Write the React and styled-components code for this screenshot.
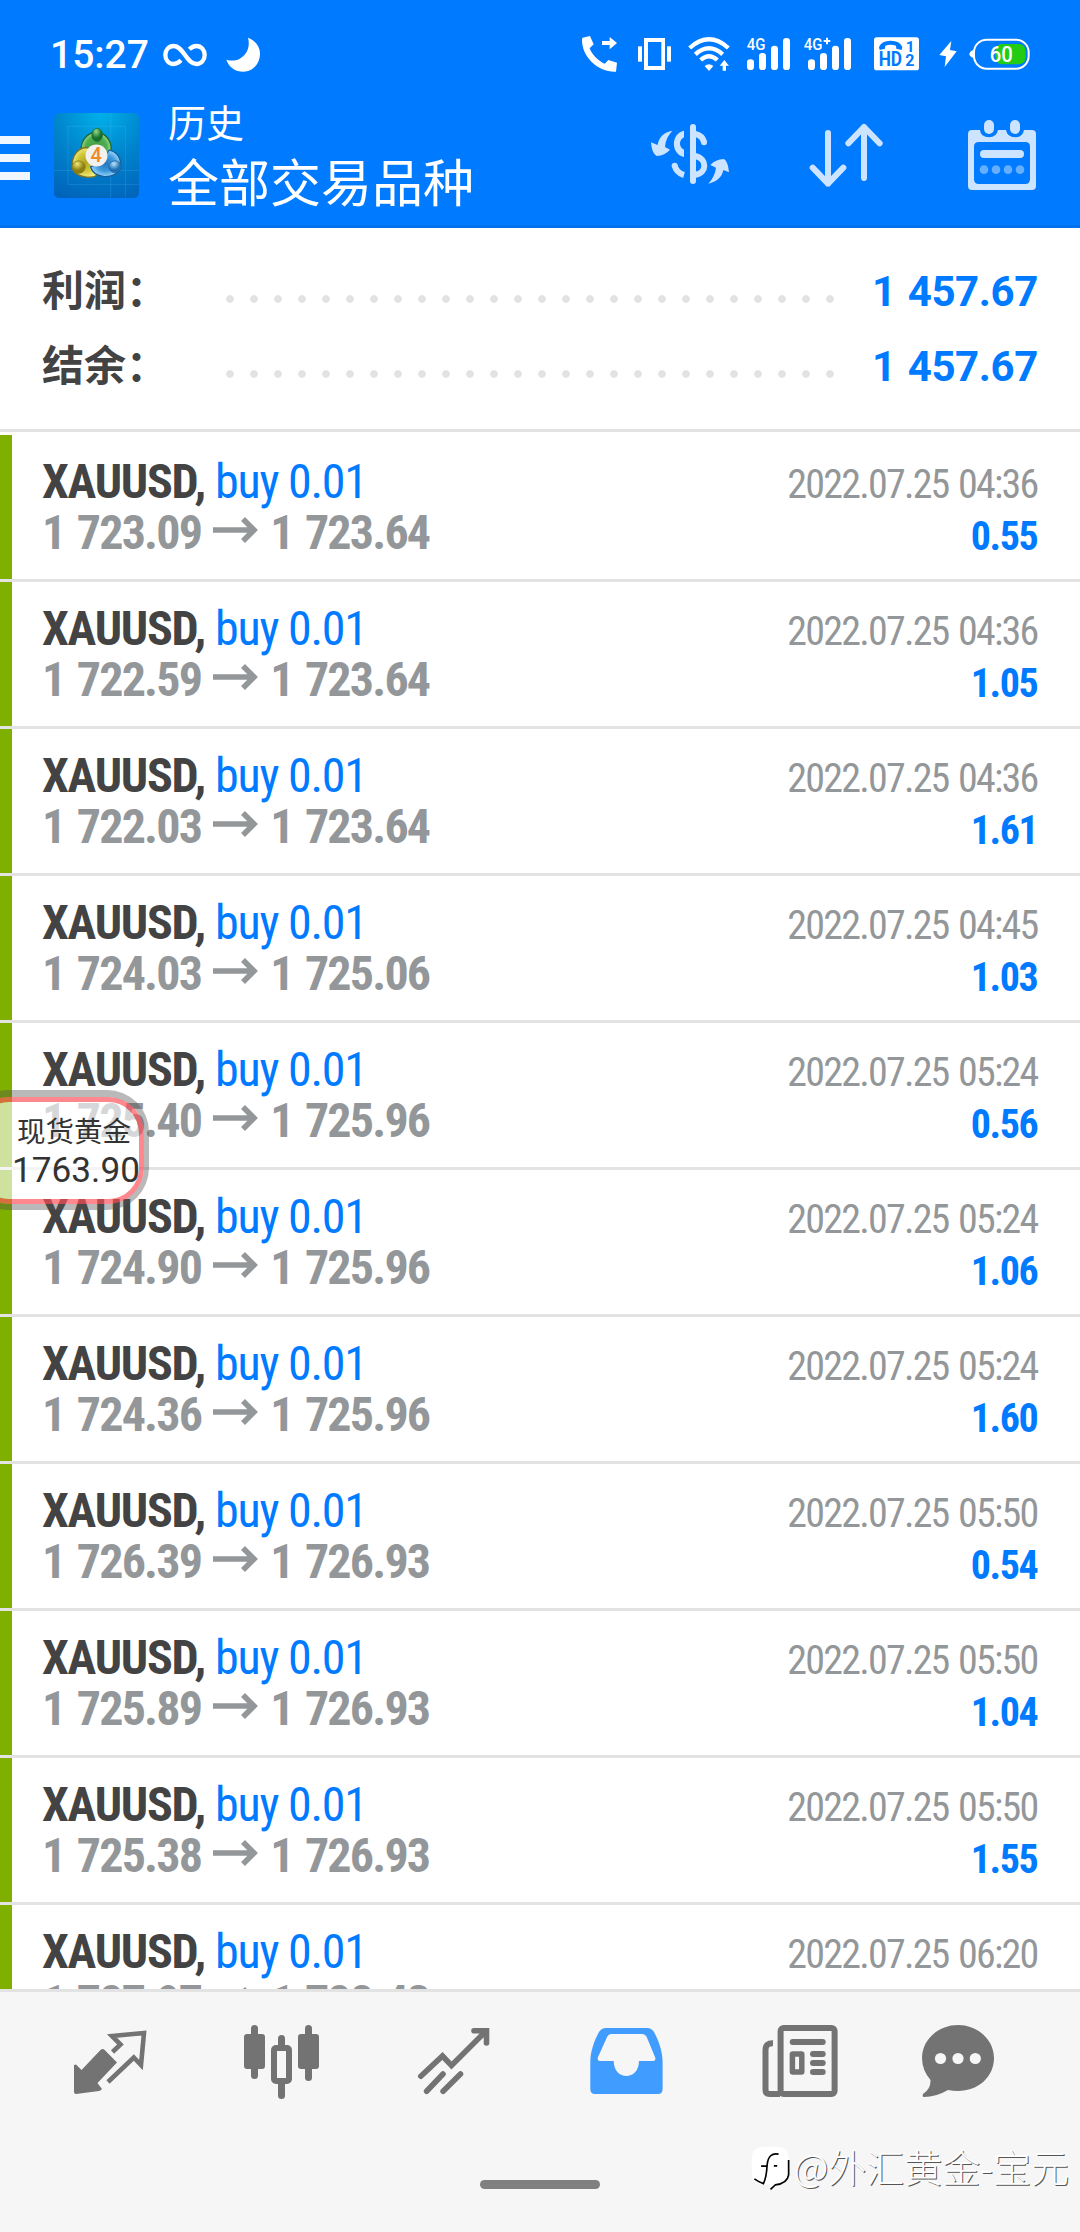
import React from 'react'
import styled, { createGlobalStyle } from 'styled-components';


const deals = [
    { open: '1 723.09', close: '1 723.64', time: '2022.07.25 04:36', profit: '0.55' },
    { open: '1 722.59', close: '1 723.64', time: '2022.07.25 04:36', profit: '1.05' },
    { open: '1 722.03', close: '1 723.64', time: '2022.07.25 04:36', profit: '1.61' },
    { open: '1 724.03', close: '1 725.06', time: '2022.07.25 04:45', profit: '1.03' },
    { open: '1 725.40', close: '1 725.96', time: '2022.07.25 05:24', profit: '0.56' },
    { open: '1 724.90', close: '1 725.96', time: '2022.07.25 05:24', profit: '1.06' },
    { open: '1 724.36', close: '1 725.96', time: '2022.07.25 05:24', profit: '1.60' },
    { open: '1 726.39', close: '1 726.93', time: '2022.07.25 05:50', profit: '0.54' },
    { open: '1 725.89', close: '1 726.93', time: '2022.07.25 05:50', profit: '1.04' },
    { open: '1 725.38', close: '1 726.93', time: '2022.07.25 05:50', profit: '1.55' },
    { open: '1 727.97', close: '1 728.43', time: '2022.07.25 06:20', profit: '' },
];

const summary = [
    { label: '利润：', value: '1 457.67' },
    { label: '结余：', value: '1 457.67' },
];


const SignalBars = ({ x }) => (
    <>
        <rect x={x} y="103" width="21" height="32" rx="10" />
        <rect x={x + 36} y="84" width="21" height="51" rx="10" />
        <rect x={x + 72} y="62" width="21" height="73" rx="10" />
        <rect x={x + 108} y="39" width="21" height="96" rx="10" />
    </>
);

const StatusIcons = () => (
    <StatusGroup>
        <StatusIcon viewBox="33 30 111 120" $w={37}>
            <path d="M38 38L60 33L71 58L59 70C64 86 84 108 104 116L115 105L141 113L138 140C88 143 34 98 36 42Z" />
            <path d="M96 48H119V36L141 54L119 73V60H96Z" />
        </StatusIcon>
        <StatusIcon viewBox="201 30 105 120" $w={35} $gap={19}>
            <path fillRule="evenodd" d="M222 39H285V135H222ZM234 51V123H274V51Z" />
            <rect x="204" y="64" width="12" height="46" />
            <rect x="291" y="64" width="12" height="46" />
        </StatusIcon>
        <StatusIcon viewBox="354 30 126 120" $w={42} $gap={16}>
            <g fill="none" stroke="#fff" strokeWidth="13">
                <path d="M359 69Q417 17 475 69" />
                <path d="M376 88Q417 52 458 88" />
                <path d="M392 105Q417 82 442 105" />
            </g>
            <path d="M404 123Q417 113 430 123L417 138Z" />
            <path d="M463 105L477 122H468V137H458V122H449Z" />
        </StatusIcon>
        <StatusIcon viewBox="528 30 135 120" $w={45} $gap={16}>
            <text x="530" y="75" fontSize="49" fontWeight="500" textLength="56" lengthAdjust="spacingAndGlyphs">4G</text>
            <SignalBars x={531} />
        </StatusIcon>
        <StatusIcon viewBox="9 30 147 120" $w={49} $gap={12}>
            <text x="11" y="75" fontSize="49" fontWeight="500" textLength="56" lengthAdjust="spacingAndGlyphs">4G</text>
            <path d="M78 38H84V45H91V51H84V58H78V51H71V45H78Z" />
            <SignalBars x={24} />
        </StatusIcon>
        <StatusIcon viewBox="219 30 141 120" $w={47} $gap={21}>
            <rect x="222" y="37" width="135" height="99" rx="8" />
            <g fill="#007aff" fontWeight="700">
                <path d="M237 66Q245 47 272 47Q299 47 307 66L305 75L289 71L288 62Q272 56 256 62L255 71L239 75Z" />
                <text x="236" y="123" fontSize="58" textLength="70" lengthAdjust="spacingAndGlyphs">HD</text>
                <text x="317" y="80" fontSize="46">1</text>
                <text x="316" y="124" fontSize="48">2</text>
            </g>
        </StatusIcon>
        <StatusIcon viewBox="414 30 60 120" $w={20} $gap={18}>
            <path d="M454 48L418 90L438 94L434 126L470 79L450 75Z" />
        </StatusIcon>
        <StatusIcon viewBox="507 30 186 120" $w={62} $gap={11}>
            <path d="M521 74Q508 80 508 87Q508 94 521 100Z" />
            <rect x="522" y="44" width="164" height="87" rx="38" fill="none" stroke="#fff" strokeWidth="6" />
            <path fill="#22cc14" d="M600 57H655Q677 57 677 80V96Q677 118 655 118H600Q586 110 586 88Q586 66 600 57Z" />
            <text x="569" y="112" fontSize="66" fontWeight="500" textLength="69" lengthAdjust="spacingAndGlyphs">60</text>
        </StatusIcon>
    </StatusGroup>
);

const AppLogo = () => (
    <Logo viewBox="0 0 256 256">
        <defs>
            <radialGradient id="sky" cx="0.55" cy="0" r="1.1">
                <stop offset="0" stopColor="#00b0ea" />
                <stop offset="0.5" stopColor="#0084cc" />
                <stop offset="1" stopColor="#0062ba" />
            </radialGradient>
            <radialGradient id="green"><stop offset="0" stopColor="#3f9a48" /><stop offset="0.7" stopColor="#4fae4e" /><stop offset="1" stopColor="#a4dc92" /></radialGradient>
            <radialGradient id="greenBall" cx="0.4" cy="0.25"><stop offset="0" stopColor="#9ad88c" /><stop offset="1" stopColor="#14702a" /></radialGradient>
            <radialGradient id="yellow"><stop offset="0" stopColor="#b0a220" /><stop offset="0.6" stopColor="#d2c838" /><stop offset="1" stopColor="#f0ea80" /></radialGradient>
            <radialGradient id="yellowBall" cx="0.4" cy="0.25"><stop offset="0" stopColor="#f0e878" /><stop offset="1" stopColor="#8c7f10" /></radialGradient>
            <radialGradient id="blue"><stop offset="0" stopColor="#2676b8" /><stop offset="0.6" stopColor="#3f9ade" /><stop offset="1" stopColor="#98d4fa" /></radialGradient>
            <radialGradient id="blueBall" cx="0.4" cy="0.25"><stop offset="0" stopColor="#b8e4fc" /><stop offset="1" stopColor="#1d70b4" /></radialGradient>
        </defs>
        <rect width="256" height="256" rx="16" fill="url(#sky)" />
        <path d="M171 0V256M0 173H256M42 40V215H256M215 40V256M42 40H215" fill="none" stroke="#6cc8ff" strokeOpacity="0.28" strokeWidth="2" />
        <g strokeWidth="4">
            <path d="M82 112C80 84 100 58 128 58C156 60 174 84 172 112C170 130 160 142 150 150L106 146C92 138 84 126 82 112Z" fill="url(#green)" stroke="#1b6a34" />
            <path d="M55 160C54 126 74 104 100 104L122 112L134 160L128 188C122 193 110 194 98 193C74 190 56 180 55 160Z" fill="url(#yellow)" stroke="#7c7420" />
            <path d="M110 162L140 150L166 112C192 116 204 140 200 166C194 184 170 194 148 191C126 188 114 176 110 162Z" fill="url(#blue)" stroke="#17609e" />
            <ellipse cx="130" cy="66" rx="16" ry="20" fill="url(#greenBall)" stroke="#1b6a34" strokeWidth="2" />
            <ellipse cx="74" cy="163" rx="20" ry="19" fill="url(#yellowBall)" stroke="#7c7420" strokeWidth="2" />
            <ellipse cx="184" cy="162" rx="19" ry="18" fill="url(#blueBall)" stroke="#17609e" strokeWidth="2" />
        </g>
        <circle cx="128" cy="128" r="33" fill="#f3f0f0" />
        <text x="110" y="149" fontSize="60" fontWeight="500" fill="#f08a24">4</text>
    </Logo>
);

const HeaderIcons = () => (
    <ActionGroup>
        <ActionIcon viewBox="30 0 240 270" $w={80}>
            <path d="M97 62C72 66 56 82 53 105L33 97Q35 130 50 138Q75 136 90 119L75 111C76 92 84 76 97 62Z" />
            <path d="M205 221C230 215 246 202 250 180L267 187Q264 155 252 147Q226 149 211 165L228 173C226 192 217 208 205 221Z" />
            <path d="M132 62C92 70 92 132 132 141V119C116 112 116 90 132 82Z" />
            <g fill="none" stroke="#cce4ff" strokeWidth="18">
                <path d="M159 51V213" strokeLinecap="round" />
                <path d="M166 72Q188 77 192 97" />
                <path d="M166 138C202 146 202 189 166 194" />
                <path d="M104 166Q108 188 132 195" />
            </g>
            <circle cx="192" cy="97" r="9" />
            <circle cx="104" cy="167" r="9" />
        </ActionIcon>
        <ActionIcon viewBox="507 0 222 270" $w={74} $gap={79}>
            <g fill="none" stroke="#cce4ff" strokeWidth="18" strokeLinecap="round" strokeLinejoin="round">
                <path d="M564 69V221M518 173L564 221L610 173" />
                <path d="M672 204V51M625 100L672 51L719 100" />
            </g>
        </ActionIcon>
        <ActionIcon viewBox="984 0 204 270" $w={68} $gap={85}>
            <path fillRule="evenodd" d="M996 60H1020Q1022 82 1047 82Q1070 82 1074 60H1098Q1102 82 1125 82Q1148 82 1152 60H1176Q1188 60 1188 72V228Q1188 240 1176 240H996Q984 240 984 228V72Q984 60 996 60ZM1016 96Q1002 96 1002 110V208Q1002 222 1016 222H1156Q1170 222 1170 208V110Q1170 96 1156 96Z" />
            <rect x="1032" y="30" width="30" height="42" rx="15" />
            <rect x="1110" y="30" width="30" height="42" rx="15" />
            <rect x="1020" y="120" width="132" height="24" rx="12" />
            <g opacity="0.5">
                <circle cx="1032" cy="179" r="13" />
                <circle cx="1068" cy="179" r="13" />
                <circle cx="1104" cy="179" r="13" />
                <circle cx="1140" cy="179" r="13" />
            </g>
        </ActionIcon>
    </ActionGroup>
);

const NavIcons = () => (
    <NavBar>
        <NavIcon viewBox="0 0 96 96">
            <path d="M12 55L14 54.5L19.5 60L38.5 40Q40.6 38 42.7 40L55 52.5L35.5 73L40 79Q39 80.5 37 81L14 84Q12 84 12 82Z" />
            <path d="M50.5 42L58.5 34.5L50 26L82 23L79 55L71.8 47.5L46 72" fill="none" stroke="#737373" strokeWidth="4.6" />
        </NavIcon>
        <NavIcon viewBox="0 0 96 96">
            <rect x="10" y="24" width="21" height="35" rx="3" />
            <rect x="17" y="15" width="7" height="54" rx="3.5" />
            <rect x="64" y="24" width="21" height="35" rx="3" />
            <rect x="71" y="15" width="7" height="56" rx="3.5" />
            <rect x="44" y="25" width="7" height="14" rx="3.5" />
            <rect x="44" y="70" width="7" height="19" rx="3.5" />
            <rect x="40" y="38" width="15" height="33" rx="2" fill="none" stroke="#737373" strokeWidth="6" />
        </NavIcon>
        <NavIcon viewBox="0 0 96 96">
            <g fill="none" stroke="#737373" strokeWidth="5.6" strokeLinecap="round">
                <path d="M14.8 66.2L36.5 46L45.5 55.5L80 21M68 20.7H80.5V33" />
                <path d="M20.6 81.3L37 64M37.1 81.3L54.5 64" />
            </g>
        </NavIcon>
        <NavIcon viewBox="0 0 96 96" $active>
            <path fillRule="evenodd" d="M28 18H69Q73.5 18 76 22C81 31 84.6 42 84.6 52V79Q84.6 84 80 84H17Q12.3 84 12.3 79V52C12.3 42 16 31 21 22Q23.5 18 28 18ZM33 24Q30.5 24 29.3 26.5L20 47Q18.8 51 22 51H35.7C35.7 71 61 71 61 51H75Q78.5 51 77 47L68.5 26.5Q67 24 64.5 24Z" />
        </NavIcon>
        <NavIcon viewBox="0 0 96 96">
            <g fill="none" stroke="#737373" strokeWidth="6">
                <rect x="30.6" y="18" width="54" height="66" rx="3" />
                <path d="M23 33.2Q15.5 33 15.5 40V80Q15.5 84 19.5 84H30" />
                <rect x="42.4" y="44" width="9.4" height="18" rx="0.5" strokeWidth="5.5" />
            </g>
            <rect x="39.7" y="29" width="36" height="6" rx="3" />
            <rect x="60" y="41" width="15.7" height="6" rx="3" />
            <rect x="60" y="50" width="15.7" height="6" rx="3" />
            <rect x="60" y="59" width="15.7" height="6" rx="3" />
        </NavIcon>
        <NavIcon viewBox="0 0 96 96">
            <path d="M36 15C56 15 72 30 72 48C72 67 56 81 36 81Q31 81 26 80Q14 87 2 87Q0 87 1 84Q9 79 8.5 70Q0 60 0 48C0 30 16 15 36 15Z" />
            <g fill="#f6f6f6">
                <circle cx="18.5" cy="48.5" r="5.6" />
                <circle cx="36" cy="48.5" r="5.6" />
                <circle cx="53.3" cy="48.5" r="5.6" />
            </g>
        </NavIcon>
    </NavBar>
);


const App = () => {

    return (
        <PageLayout>
            <GlobalStyle />

            <Header>
                <StatusBar>
                    <Clock>15:27</Clock>
                    <StatusIcon viewBox="0 0 132 120" $w={44} $gap={15}>
                        <path d="M54 76C47 83 40 87 32 87C17 87 7 75 7 60C7 45 17 33 32 33C62 33 70 87 100 87C115 87 125 75 125 60C125 45 115 33 100 33C92 33 85 37 79 43" fill="none" stroke="#fff" strokeWidth="13" />
                    </StatusIcon>
                    <StatusIcon viewBox="0 0 102 120" $w={34} $gap={19}>
                        <path d="M66 8C87 16 102 34 102 56C102 86 80 110 52 110C28 110 8 96 1 74C14 78 28 78 40 72C64 60 73 34 66 8Z" />
                    </StatusIcon>
                    <StatusIcons />
                </StatusBar>
                <TitleBar>
                    <MenuButton><i /><i /><i /></MenuButton>
                    <AppLogo />
                    <TitleWrap>
                        <SubTitle>历史</SubTitle>
                        <Title>全部交易品种</Title>
                    </TitleWrap>
                    <HeaderIcons />
                </TitleBar>
            </Header>

            <SummaryWrap>
                {summary.map((item) => (
                    <SummaryRow key={item.label}>
                        <SummaryLabel>{item.label}</SummaryLabel>
                        <Dots />
                        <SummaryValue>{item.value}</SummaryValue>
                    </SummaryRow>
                ))}
            </SummaryWrap>

            <DealList>
                {deals.map((deal) => (
                    <DealRow key={deal.open}>
                        <Stripe />
                        <DealInfo>
                            <DealLine $h={51}>
                                <Symbol>XAUUSD,</Symbol>
                                <Side>buy 0.01</Side>
                            </DealLine>
                            <DealLine $h={52}>
                                <Price>{deal.open}</Price>
                                <Arrow viewBox="0 0 48 28">
                                    <path d="M1 14H42M31 3L42 14L31 25" />
                                </Arrow>
                                <Price>{deal.close}</Price>
                            </DealLine>
                        </DealInfo>
                        <DealResult>
                            <Time>{deal.time}</Time>
                            <Profit>{deal.profit}</Profit>
                        </DealResult>
                    </DealRow>
                ))}
            </DealList>

            <Footer>
                <NavIcons />
                <HomeBar />
                <Watermark>
                    <WatermarkLogo viewBox="60 60 116 140">
                        <path d="M96 68H140Q170 70 172 100V150Q168 180 132 182L118 195L118 182H96Q64 178 62 148V100Q64 70 96 68Z" fill="#fff" />
                        <path d="M142 90Q112 84 108 122Q106 160 97 178Q84 174 70 164M90 126H106M128 125H138M172 108V152Q168 178 132 182L118 195" fill="none" stroke="#000" strokeWidth="5" />
                    </WatermarkLogo>
                    @外汇黄金-宝元
                </Watermark>
            </Footer>

            <PriceBubble>
                <BubbleBody>
                    <BubbleName>现货黄金</BubbleName>
                    <BubblePrice>1763.90</BubblePrice>
                </BubbleBody>
            </PriceBubble>
        </PageLayout>
    )

}
export default App;


const GlobalStyle = createGlobalStyle`
    body {
        margin: 0;
        background: #fff;
    }
    * {
        box-sizing: border-box;
    }
`;

const PageLayout = styled.div`
    position: relative;
    display: flex;
    flex-direction: column;
    width: 1080px;
    height: 2232px;
    overflow: hidden;
    background: #fff;
    font-family: Roboto, "Noto Sans CJK SC", sans-serif;
`;

const Header = styled.div`
    display: flex;
    flex-direction: column;
    flex: none;
    height: 228px;
    background: #007aff;
    border-bottom: 3px solid #0071ec;
`;

const StatusBar = styled.div`
    display: flex;
    align-items: flex-start;
    height: 95px;
    padding: 35px 49px 0 50px;
`;

const Clock = styled.div`
    width: 98px;
    line-height: 40px;
    font-size: 39px;
    font-weight: 500;
    color: #fff;
`;

const StatusGroup = styled.div`
    display: flex;
    margin-left: auto;
`;

const StatusIcon = styled.svg`
    display: block;
    flex: none;
    width: ${(props) => props.$w}px;
    height: 40px;
    margin-left: ${(props) => props.$gap || 0}px;
    fill: #fff;
`;

const TitleBar = styled.div`
    display: flex;
    align-items: flex-start;
    padding-right: 44px;
`;

const MenuButton = styled.div`
    display: flex;
    flex-direction: column;
    gap: 10px;
    width: 30px;
    margin-top: 41px;

    i {
        height: 8px;
        background: #f0f7ff;
    }
`;

const Logo = styled.svg`
    width: 85px;
    height: 85px;
    margin: 18px 0 0 24px;
`;

const TitleWrap = styled.div`
    display: flex;
    flex-direction: column;
    margin-left: 29px;
    padding-top: 1px;
    color: #fff;
`;

const SubTitle = styled.div`
    line-height: 56px;
    font-size: 38px;
`;

const Title = styled.div`
    line-height: 66px;
    font-size: 51px;
`;

const ActionGroup = styled.div`
    display: flex;
    margin: 15px 0 0 auto;
`;

const ActionIcon = styled.svg`
    width: ${(props) => props.$w}px;
    height: 90px;
    margin-left: ${(props) => props.$gap || 0}px;
    fill: #cce4ff;
`;

const SummaryWrap = styled.div`
    flex: none;
    height: 204px;
    padding: 26px 42px 0 42px;
    border-bottom: 3px solid #e3e3e3;
`;

const SummaryRow = styled.div`
    display: flex;
    align-items: center;
    height: 75px;
`;

const SummaryLabel = styled.div`
    width: 176px;
    line-height: 75px;
    font-size: 42px;
    font-weight: 700;
    color: #434343;
    white-space: nowrap;
`;

const Dots = styled.div`
    width: 624px;
    height: 8px;
    margin-top: 14px;
    background: radial-gradient(circle at 12px 4px, #e2e2e2 3.4px, transparent 4.2px) 0 0 / 24px 8px;
`;

const SummaryValue = styled.div`
    margin-left: auto;
    font-size: 42px;
    font-weight: 700;
    letter-spacing: -0.4px;
    word-spacing: 2px;
    color: #007aff;
`;

const DealList = styled.div`
    flex: none;
    height: 1557px;
    padding-top: 3px;
    overflow: hidden;
`;

const DealRow = styled.div`
    display: flex;
    height: 147px;
    padding-right: 42px;
    border-bottom: 3px solid #e3e3e3;
`;

const Stripe = styled.div`
    width: 12px;
    background: #7fb000;
`;

const DealInfo = styled.div`
    padding: 21px 0 0 30px;
`;

const DealLine = styled.div`
    display: flex;
    align-items: center;
    height: ${(props) => props.$h}px;
    line-height: ${(props) => props.$h}px;
    font-size: 48px;
    font-stretch: 75%;
    letter-spacing: -1.25px;
    white-space: nowrap;
`;

const Symbol = styled.span`
    font-weight: 700;
    color: #434343;
`;

const Side = styled.span`
    margin-left: 10px;
    color: #007aff;
`;

const Price = styled.span`
    font-weight: 700;
    letter-spacing: -1.8px;
    word-spacing: 3px;
    color: #949799;
`;

const Arrow = styled.svg`
    width: 48px;
    height: 28px;
    margin: 0 10px 6px 11px;
    fill: none;
    stroke: #949799;
    stroke-width: 5.6;
`;

const DealResult = styled.div`
    display: flex;
    flex-direction: column;
    align-items: flex-end;
    margin-left: auto;
    padding-top: 24px;
    line-height: 52px;
    font-size: 40px;
    font-stretch: 75%;
`;

const Time = styled.div`
    margin-right: 0.6px;
    letter-spacing: -1.78px;
    word-spacing: 2px;
    color: #949799;
`;

const Profit = styled.div`
    margin-right: 0.6px;
    font-weight: 700;
    letter-spacing: -1.4px;
    color: #007aff;
`;

const Footer = styled.div`
    position: relative;
    flex: 1;
    background: #f6f6f6;
    border-top: 3px solid #e3e3e3;
`;

const NavBar = styled.div`
    display: grid;
    grid-template-columns: repeat(6, 172px);
    justify-items: center;
    padding: 18px 24px 0;
`;

const NavIcon = styled.svg`
    width: 96px;
    height: 96px;
    fill: ${(props) => (props.$active ? '#409cff' : '#737373')};
`;

const HomeBar = styled.div`
    width: 120px;
    height: 9px;
    margin: 74px auto 0;
    border-radius: 5px;
    background: #808080;
`;

const Watermark = styled.div`
    position: absolute;
    right: 11px;
    bottom: 41px;
    display: flex;
    align-items: center;
    line-height: 50px;
    font-family: "Noto Sans CJK SC", sans-serif;
    font-size: 38px;
    font-weight: 300;
    color: #fff;
    text-shadow: 1px 1px 0 #555;
    white-space: nowrap;
`;

const WatermarkLogo = styled.svg`
    width: 39px;
    height: 47px;
    margin: 4px 4px 0 0;
`;

const PriceBubble = styled.div`
    position: absolute;
    top: 1090px;
    left: -34px;
    width: 183px;
    height: 120px;
    border: solid rgba(80, 80, 80, 0.4);
    border-width: 7px 5px 6px 7px;
    border-radius: 42px;
`;

const BubbleBody = styled.div`
    display: flex;
    flex-direction: column;
    height: 107px;
    padding: 11px 0 0 34px;
    border: 5px solid rgba(255, 80, 90, 0.68);
    border-radius: 36px;
    background: rgba(255, 255, 255, 0.62);
    background-clip: padding-box;
    color: #333;
    white-space: nowrap;
`;

const BubbleName = styled.div`
    padding-left: 5px;
    line-height: 40px;
    font-size: 28.5px;
`;

const BubblePrice = styled.div`
    margin-top: -1px;
    line-height: 36px;
    font-size: 35.2px;
`;
